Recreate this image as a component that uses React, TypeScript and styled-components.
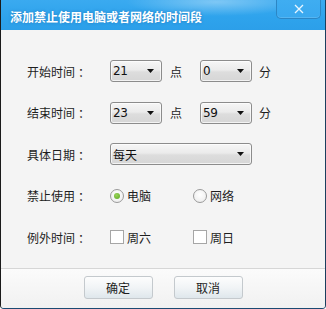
import React, { useState } from "react";
import styled, { createGlobalStyle } from "styled-components";

const Global = createGlobalStyle`
  html, body { margin: 0; padding: 0; background: #ffffff; }
  body { font-family: "Noto Sans CJK SC", "Noto Sans", sans-serif; }
  * { box-sizing: border-box; }
`;

const Window = styled.div`
  width: 326px;
  height: 309px;
  display: flex;
  flex-direction: column;
  background: #f4f4f4;
  border-left: 1px solid #1a1a1a;
  border-right: 1px solid #1a3e5e;
  border-bottom: 1px solid #1b4a72;
  border-radius: 0 0 4px 4px;
  overflow: hidden;
`;

const TitleBar = styled.div`
  height: 30px;
  flex: none;
  display: flex;
  align-items: flex-start;
  background:
    radial-gradient(ellipse 90px 14px at 215px 2px, rgba(255,255,255,0.35), rgba(255,255,255,0) 100%),
    linear-gradient(#3aaaf0, #2ea3ec 60%, #2c9fe9);
`;

const Title = styled.div`
  flex: 1;
  padding: 8px 0 0 9px;
  color: #ffffff;
  font-size: 12px;
  font-weight: bold;
  line-height: 17px;
  text-shadow: 0 0 3px rgba(0, 60, 120, 0.35);
`;

const CloseButton = styled.div`
  width: 45px;
  height: 19px;
  margin-right: 4px;
  display: flex;
  align-items: center;
  justify-content: center;
  border: 1px solid #2c86c4;
  border-top: none;
  border-radius: 0 0 5px 5px;
  background: linear-gradient(#3fadf1, #39a8ef);
  box-shadow: inset 0 -1px 0 rgba(255,255,255,0.15);
`;

const Body = styled.div`
  flex: 1;
  display: flex;
  flex-direction: column;
  gap: 19.5px;
  padding: 30px 0 0 26px;
`;

const Row = styled.div`
  height: 22px;
  display: flex;
  align-items: center;
  font-size: 12px;
  color: #1e1e1e;
`;

const Label = styled.div`
  width: 83px;
  flex: none;
  display: flex;
  align-items: center;
  font-size: 12px;
  color: #1e1e1e;
`;

const Colon = styled.span`
  margin-left: 3px;
`;

const SelectBox = styled.div<{ $w: number }>`
  width: ${(p) => p.$w}px;
  height: 22px;
  flex: none;
  display: flex;
  align-items: center;
  padding: 0 7px 0 2px;
  border: 1px solid #8c8c8c;
  border-radius: 3px;
  background: linear-gradient(#f6f6f6, #ebebeb 45%, #dddddd 55%, #d6d6d6);
  box-shadow: inset 0 0 0 1px rgba(255,255,255,0.7);
  font-size: 12px;
  color: #111;
`;

const SelectText = styled.span`
  flex: 1;
  letter-spacing: -0.3px;
  font-family: "DejaVu Sans", "Noto Sans CJK SC", sans-serif;
`;

const CJKText = styled.span`
  flex: 1;
  font-family: "Noto Sans CJK SC", sans-serif;
`;

const Unit = styled.span<{ $ml: number; $mr: number }>`
  margin: 0 ${(p) => p.$mr}px 0 ${(p) => p.$ml}px;
  font-size: 12px;
  color: #1e1e1e;
`;

const Option = styled.label`
  width: 83px;
  flex: none;
  display: flex;
  align-items: center;
  gap: 3px;
  font-size: 12px;
  color: #1e1e1e;
  cursor: default;
`;

const Radio = styled.span<{ $on: boolean }>`
  width: 14px;
  height: 14px;
  flex: none;
  border-radius: 50%;
  border: 1px solid #9a9a9a;
  background: radial-gradient(circle at 50% 40%, #ffffff, #f0f0f0 70%, #e4e4e4);
  display: flex;
  align-items: center;
  justify-content: center;
  &::after {
    content: "";
    display: ${(p) => (p.$on ? "block" : "none")};
    width: 6px;
    height: 6px;
    border-radius: 50%;
    background: radial-gradient(circle at 40% 35%, #9ad35a, #5aa821);
  }
`;

const Check = styled.span`
  width: 14px;
  height: 14px;
  flex: none;
  border: 1px solid #a6a6a6;
  background: #ffffff;
`;

const Footer = styled.div`
  height: 40px;
  flex: none;
  display: flex;
  justify-content: center;
  align-items: flex-start;
  gap: 21px;
  padding-top: 7px;
  border-top: 1px solid #d6d6d6;
  background: linear-gradient(#fbfbfb, #f1f1f1);
`;

const Button = styled.div`
  width: 69px;
  height: 23px;
  display: flex;
  align-items: center;
  justify-content: center;
  border: 1px solid #c4c9cd;
  border-radius: 3px;
  background: linear-gradient(#fdfdfd, #f1f4f6 50%, #dfe7ec);
  font-size: 12px;
  color: #1e1e1e;
`;

const Arrow = () => (
  <svg width="7" height="4" viewBox="0 0 7 4">
    <path d="M0 0 H7 L3.5 4 Z" fill="#111" />
  </svg>
);

const Select = ({ w, value, cjk }: { w: number; value: string; cjk?: boolean }) => (
  <SelectBox $w={w}>
    {cjk ? <CJKText>{value}</CJKText> : <SelectText>{value}</SelectText>}
    <Arrow />
  </SelectBox>
);

const FieldLabel = ({ text }: { text: string }) => (
  <Label>
    {text}
    <Colon>：</Colon>
  </Label>
);

export default function App() {
  const [use, setUse] = useState<"pc" | "net">("pc");
  return (
    <>
      <Global />
      <Window>
        <TitleBar>
          <Title>添加禁止使用电脑或者网络的时间段</Title>
          <CloseButton>
            <svg width="10" height="10" viewBox="0 0 10 10">
              <path d="M1 1 L9 9 M9 1 L1 9" stroke="#e8f6ff" strokeWidth="1.3" />
            </svg>
          </CloseButton>
        </TitleBar>
        <Body>
          <Row>
            <FieldLabel text="开始时间" />
            <Select w={52} value="21" />
            <Unit $ml={8} $mr={18}>点</Unit>
            <Select w={52} value="0" />
            <Unit $ml={7} $mr={0}>分</Unit>
          </Row>
          <Row>
            <FieldLabel text="结束时间" />
            <Select w={52} value="23" />
            <Unit $ml={8} $mr={18}>点</Unit>
            <Select w={52} value="59" />
            <Unit $ml={7} $mr={0}>分</Unit>
          </Row>
          <Row>
            <FieldLabel text="具体日期" />
            <Select w={142} value="每天" cjk />
          </Row>
          <Row>
            <FieldLabel text="禁止使用" />
            <Option onClick={() => setUse("pc")}>
              <Radio $on={use === "pc"} />
              电脑
            </Option>
            <Option onClick={() => setUse("net")}>
              <Radio $on={use === "net"} />
              网络
            </Option>
          </Row>
          <Row>
            <FieldLabel text="例外时间" />
            <Option>
              <Check />
              周六
            </Option>
            <Option>
              <Check />
              周日
            </Option>
          </Row>
        </Body>
        <Footer>
          <Button>确定</Button>
          <Button>取消</Button>
        </Footer>
      </Window>
    </>
  );
}
